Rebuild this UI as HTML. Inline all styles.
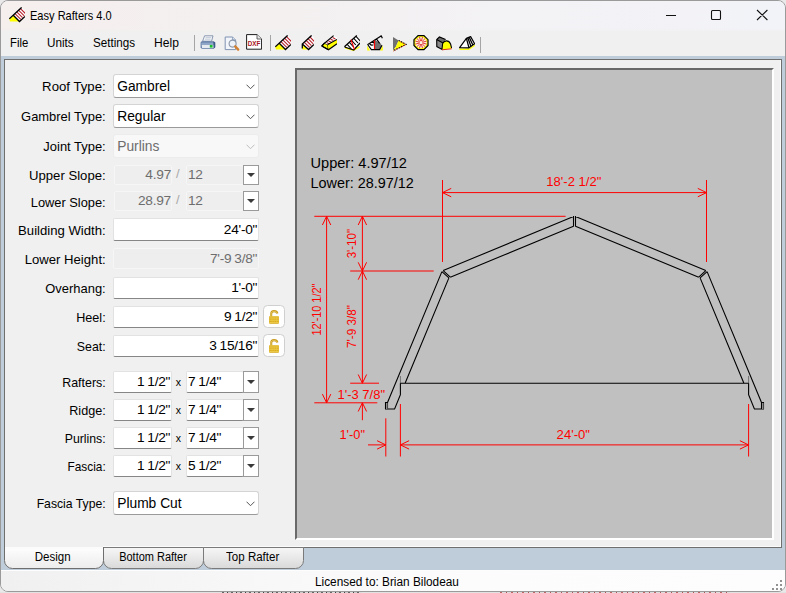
<!DOCTYPE html>
<html>
<head>
<meta charset="utf-8">
<title>Easy Rafters 4.0</title>
<style>
html,body{margin:0;padding:0;}
body{width:786px;height:593px;overflow:hidden;background:#e9e9e9;position:relative;font-family:"Liberation Sans",sans-serif;color:#000;}
.abs{position:absolute;}
#under{position:absolute;left:0;top:592px;width:786px;height:1px;background:#e2e2e2;}
#under i{position:absolute;top:0;height:1px;}
#win{position:absolute;left:0;top:0;width:784px;height:590px;border:1px solid #9a9a9a;border-radius:8px;background:#f0f0f0;overflow:hidden;}
#title{position:absolute;left:0;top:0;width:784px;height:30px;background:linear-gradient(90deg,#f5efee 0%,#f4f0f0 35%,#f3f2f5 65%,#f2f3f8 100%);}
#title .t{position:absolute;left:29.2px;top:7px;font-size:12.4px;line-height:16px;white-space:nowrap;transform:scaleX(0.892);transform-origin:left center;}
#menu{position:absolute;left:0;top:30px;width:784px;height:25px;background:#f0f0f0;}
#fade{position:absolute;left:0;top:27px;width:784px;height:6px;background:linear-gradient(to bottom,rgba(240,240,240,0),rgba(240,240,240,1));}
#menu span{position:absolute;top:3.6px;font-size:12.6px;line-height:16px;white-space:nowrap;transform-origin:left center;}
.sep{position:absolute;top:35px;width:1px;height:15px;background:#a0a0a0;}
.ico{position:absolute;top:34px;width:16px;height:16px;}
#frame{position:absolute;left:0;top:55px;width:784px;height:514px;background:#bfcddb;}
#panel{position:absolute;left:3px;top:3px;width:776px;height:487px;border:1px solid #6f6f6f;background:#f0f0f0;box-shadow:inset -1px -1px 0 #fbfbfb;}
#pg{position:absolute;left:0;top:0;width:786px;height:593px;}
.lbl{position:absolute;left:0;width:105.7px;transform:scaleX(0.995);transform-origin:right center;text-align:right;font-size:13px;line-height:19px;white-space:nowrap;color:#000;}
.cb{position:absolute;left:113px;width:144px;height:22px;border:1px solid #d4d4d4;border-bottom-color:#9a9a9a;border-radius:3px;background:#fff;font-size:13.8px;line-height:22px;}
.cb span{position:absolute;left:3.2px;top:1px;white-space:nowrap;}
.cb svg{position:absolute;right:3.4px;top:8.6px;}
.cb.dis{background:#f8f8f8;border-color:#ececec;color:#6d6d6d;}
.tb{position:absolute;height:21px;border:1px solid #e2e2e2;border-bottom:1px solid #868686;border-radius:2px;background:#fff;font-size:13.7px;letter-spacing:-0.25px;word-spacing:-0.6px;line-height:21px;white-space:nowrap;}
.tb.r{text-align:right;}
.tb.dis{background:#eeeeee;border:1px solid #f6f6f6;color:#6d6d6d;}
.tb span{position:absolute;top:0;}
.dd{position:absolute;width:14px;height:19px;border:1px solid #9a9a9a;background:#fff;}
.dd i{position:absolute;left:3px;top:8px;width:0;height:0;border-left:4px solid transparent;border-right:4px solid transparent;border-top:4px solid #3a3a3a;}
.x{position:absolute;font-size:10.5px;line-height:14px;}
.lock{position:absolute;width:19.6px;height:21px;border:1px solid #cfcfcf;border-radius:4.5px;background:#fefefe;}
#draw{position:absolute;left:290px;top:8px;width:475px;height:468px;border:2px solid #696969;border-right:2px solid #fff;border-bottom:2px solid #fff;background:#c0c0c0;}
.tab{position:absolute;top:546.8px;height:20px;font-size:12px;line-height:20px;text-align:center;white-space:nowrap;}
#status{position:absolute;left:0;top:569px;width:784px;height:20px;border-top:1px solid #fdfdfd;background:linear-gradient(90deg,#f0f0f0 0%,#f7f7f7 30%,#fcfcfc 60%,#fdfdfd 100%);font-size:12px;}
</style>
</head>
<body>
<div id="under"><i style="left:222px;width:140px;background:repeating-linear-gradient(90deg,#666 0 2px,#ddd 2px 5px,#444 5px 6px,#ccc 6px 9px)"></i><i style="left:500px;width:230px;background:repeating-linear-gradient(90deg,#b66 0 2px,#ddd 2px 6px,#a55 6px 7px,#ddd 7px 11px)"></i></div>
<div id="win">
  <div id="title">
    <span class="t">Easy Rafters 4.0</span>
  </div>
  <div id="menu">
    <span style="left:8.8px;transform:scaleX(0.9)">File</span>
    <span style="left:46px;transform:scaleX(0.93)">Units</span>
    <span style="left:92px;transform:scaleX(0.925)">Settings</span>
    <span style="left:153px;transform:scaleX(0.96)">Help</span>
  </div>
  <div id="fade"></div>
  <div id="frame">
    <div id="panel">
      <div id="draw"></div>
    </div>
  </div>
  <div id="status"><span class="abs" style="left:313.6px;top:3.6px;line-height:14px;white-space:nowrap;transform:scaleX(0.985);transform-origin:left center">Licensed to: Brian Bilodeau</span></div>
</div>
<div id="pg">
<svg id="dwg" width="786" height="593" viewBox="0 0 786 593" style="position:absolute;left:0;top:0">
<path d="M314.3 216.3L565.6 216.3M350.2 271L433.7 271M350.2 383.2L379 383.2M314.3 402.8L377.3 402.8M326.6 216.3L326.6 402.8M330.80 225.00L326.6 216.3L322.40 225.00M322.40 394.10L326.6 402.8L330.80 394.10M362.4 216.3L362.4 383.2M366.60 225.00L362.4 216.3L358.20 225.00M358.20 262.30L362.4 271L366.60 262.30M366.60 279.70L362.4 271L358.20 279.70M358.20 374.50L362.4 383.2L366.60 374.50M362.4 402.8L362.4 420.2M366.60 411.50L362.4 402.8L358.20 411.50M442.5 180L442.5 262M706.5 180L706.5 262M442.5 192.6L706.5 192.6M451.20 188.40L442.5 192.6L451.20 196.80M697.80 196.80L706.5 192.6L697.80 188.40M385.8 418.3L385.8 456.5M400.4 404L400.4 456.5M748.6 404L748.6 456.5M368 444.9L385.8 444.9M377.10 449.10L385.8 444.9L377.10 440.70M400.4 444.9L748.6 444.9M409.10 440.70L400.4 444.9L409.10 449.10M739.90 449.10L748.6 444.9L739.90 440.70" fill="none" stroke="#ff0000" stroke-width="1"/>
<path d="M400.4 383.2L400.4 376M748.6 383.2L748.6 376" fill="none" stroke="#707070" stroke-width="1"/>
<path d="M573.5 216.4L443.2 270.6M575.5 216.4L705.8 270.6M573.5 226.3L450.3 277.2M575.5 226.3L698.7 277.2M573.5 216L573.5 226.5M575.5 216L575.5 226.5M441.9 271.6L448.9 277.9M707.1 271.6L700.1 277.9M443.2 270.6L450.3 277.2M705.8 270.6L698.7 277.2M441.9 271.6L387.5 402.5M707.1 271.6L761.5 402.5M448.9 277.9L405.1 383.2M700.1 277.9L743.9 383.2M387.5 402.5L385.5 402.5L385.5 409L394.6 409L400.4 394.7L400.4 383.2M761.5 402.5L763.5 402.5L763.5 409L754.4 409L748.6 394.7L748.6 383.2M387.5 402.5L387.5 409M761.5 402.5L761.5 409M400.4 383.2L748.6 383.2" fill="none" stroke="#000" stroke-width="1.1" stroke-linejoin="miter"/>
<path d="M386 403h1.5v6h-1.5z" fill="#8c8c8c"/><path d="M762 403h1.5v6h-1.5z" fill="#8c8c8c"/>
<text x="546.3" y="185.8" font-size="13" fill="#ff0000" textLength="55" lengthAdjust="spacingAndGlyphs">18'-2 1/2&quot;</text>
<text x="556.6" y="439.1" font-size="13" fill="#ff0000" textLength="33.4" lengthAdjust="spacingAndGlyphs">24'-0&quot;</text>
<text x="337.5" y="398.8" font-size="13" fill="#ff0000" textLength="47.5" lengthAdjust="spacingAndGlyphs">1'-3 7/8&quot;</text>
<text x="339.5" y="438.8" font-size="13" fill="#ff0000" textLength="25.5" lengthAdjust="spacingAndGlyphs">1'-0&quot;</text>
<text x="355.8" y="258.3" font-size="13" fill="#ff0000" textLength="29.3" lengthAdjust="spacingAndGlyphs" transform="rotate(-90 355.8 258.3)">3'-10&quot;</text>
<text x="320.8" y="335.5" font-size="13" fill="#ff0000" textLength="51.8" lengthAdjust="spacingAndGlyphs" transform="rotate(-90 320.8 335.5)">12'-10 1/2&quot;</text>
<text x="356.3" y="348" font-size="13" fill="#ff0000" textLength="43" lengthAdjust="spacingAndGlyphs" transform="rotate(-90 356.3 348)">7'-9 3/8&quot;</text>
<text x="310.5" y="168" font-size="14.4" fill="#000" textLength="96.5" lengthAdjust="spacingAndGlyphs">Upper: 4.97/12</text>
<text x="310.5" y="188" font-size="14.4" fill="#000" textLength="103.2" lengthAdjust="spacingAndGlyphs">Lower: 28.97/12</text>
</svg>
<div class="lbl" style="top:77.0px;transform:scaleX(1.015)">Roof Type:</div>
<div class="cb" style="top:74px;height:22px;line-height:22px"><span>Gambrel</span><svg width="9" height="6" viewBox="0 0 9 6"><path d="M0.5 0.7 L4.5 4.7 L8.5 0.7" fill="none" stroke="#555" stroke-width="1"/></svg></div>
<div class="lbl" style="top:107.0px">Gambrel Type:</div>
<div class="cb" style="top:104px;height:22px;line-height:22px"><span>Regular</span><svg width="9" height="6" viewBox="0 0 9 6"><path d="M0.5 0.7 L4.5 4.7 L8.5 0.7" fill="none" stroke="#555" stroke-width="1"/></svg></div>
<div class="lbl" style="top:137.0px">Joint Type:</div>
<div class="cb dis" style="top:134px;height:22px;line-height:22px"><span>Purlins</span><svg width="9" height="6" viewBox="0 0 9 6"><path d="M0.5 0.7 L4.5 4.7 L8.5 0.7" fill="none" stroke="#bdbdbd" stroke-width="1"/></svg></div>
<div class="lbl" style="top:166.0px;transform:scaleX(1.01)">Upper Slope:</div>
<div class="tb dis" style="left:114px;top:165px;width:56px;height:18px;line-height:18px"><span style="right:0px">4.97</span></div>
<div class="x" style="left:176px;top:167px;color:#a8a8a8;font-size:13px">/</div>
<div class="tb dis" style="left:186px;top:165px;width:56px;height:18px;line-height:18px"><span style="left:1px">12</span></div>
<div class="dd" style="left:243px;top:165px;height:18px"><i style="top:7px"></i></div>
<div class="lbl" style="top:193.0px;transform:scaleX(0.987)">Lower Slope:</div>
<div class="tb dis" style="left:114px;top:191px;width:56px;height:18px;line-height:18px"><span style="right:0px">28.97</span></div>
<div class="x" style="left:176px;top:193px;color:#a8a8a8;font-size:13px">/</div>
<div class="tb dis" style="left:186px;top:191px;width:56px;height:18px;line-height:18px"><span style="left:1px">12</span></div>
<div class="dd" style="left:243px;top:191px;height:18px"><i style="top:7px"></i></div>
<div class="lbl" style="top:220.5px;transform:scaleX(1.01)">Building Width:</div>
<div class="tb" style="left:113px;top:218px;width:144px;height:21px;line-height:21px"><span style="right:0.8px">24'-0"</span></div>
<div class="lbl" style="top:249.5px;transform:scaleX(1.01)">Lower Height:</div>
<div class="tb dis" style="left:113px;top:248px;width:144px;height:19px;line-height:19px"><span style="right:0.8px">7'-9 3/8"</span></div>
<div class="lbl" style="top:279.0px">Overhang:</div>
<div class="tb" style="left:113px;top:277px;width:144px;height:20px;line-height:20px"><span style="right:0.8px">1'-0"</span></div>
<div class="lbl" style="top:308.0px;transform:scaleX(0.97)">Heel:</div>
<div class="tb" style="left:113px;top:306px;width:144px;height:20px;line-height:20px"><span style="right:0.8px">9 1/2"</span></div>
<div class="lbl" style="top:337.0px;transform:scaleX(0.95)">Seat:</div>
<div class="tb" style="left:113px;top:335px;width:144px;height:20px;line-height:20px"><span style="right:0.8px">3 15/16"</span></div>
<div class="lock" style="left:263.2px;top:305px"></div>
<div class="lock" style="left:263.2px;top:334px"></div>
<div class="lbl" style="top:373.0px;transform:scaleX(0.955)">Rafters:</div>
<div class="tb" style="left:113px;top:371px;width:57px;height:20px;line-height:20px"><span style="right:0.8px">1 1/2"</span></div>
<div class="x" style="left:175.8px;top:374.6px;">x</div>
<div class="tb" style="left:186px;top:371px;width:56px;height:20px;line-height:20px"><span style="left:1px">7 1/4"</span></div>
<div class="dd" style="left:243px;top:371px;height:20px"><i style="top:8px"></i></div>
<div class="lbl" style="top:401.0px;transform:scaleX(0.97)">Ridge:</div>
<div class="tb" style="left:113px;top:399px;width:57px;height:20px;line-height:20px"><span style="right:0.8px">1 1/2"</span></div>
<div class="x" style="left:175.8px;top:402.6px;">x</div>
<div class="tb" style="left:186px;top:399px;width:56px;height:20px;line-height:20px"><span style="left:1px">7 1/4"</span></div>
<div class="dd" style="left:243px;top:399px;height:20px"><i style="top:8px"></i></div>
<div class="lbl" style="top:429.0px;transform:scaleX(0.945)">Purlins:</div>
<div class="tb" style="left:113px;top:427px;width:57px;height:20px;line-height:20px"><span style="right:0.8px">1 1/2"</span></div>
<div class="x" style="left:175.8px;top:430.6px;">x</div>
<div class="tb" style="left:186px;top:427px;width:56px;height:20px;line-height:20px"><span style="left:1px">7 1/4"</span></div>
<div class="dd" style="left:243px;top:427px;height:20px"><i style="top:8px"></i></div>
<div class="lbl" style="top:457.0px;transform:scaleX(0.91)">Fascia:</div>
<div class="tb" style="left:113px;top:455px;width:57px;height:20px;line-height:20px"><span style="right:0.8px">1 1/2"</span></div>
<div class="x" style="left:175.8px;top:458.6px;">x</div>
<div class="tb" style="left:186px;top:455px;width:56px;height:20px;line-height:20px"><span style="left:1px">5 1/2"</span></div>
<div class="dd" style="left:243px;top:455px;height:20px"><i style="top:8px"></i></div>
<div class="lbl" style="top:494.0px;transform:scaleX(0.94)">Fascia Type:</div>
<div class="cb" style="top:491px;height:22px;line-height:22px"><span>Plumb Cut</span><svg width="9" height="6" viewBox="0 0 9 6"><path d="M0.5 0.7 L4.5 4.7 L8.5 0.7" fill="none" stroke="#555" stroke-width="1"/></svg></div>
<svg class="abs" style="left:9px;top:7px" width="16" height="16" viewBox="0 0 16 16"><path d="M0.4 12L4.5 8.6L10.3 14.6L1 14.6Z" fill="#ffff00"/><path d="M4.5 8.5L12.5 0.6L16 4.1V9.6L10.5 14.5Z" fill="#fff"/><path d="M6.20 6.80l5.6 5.6M7.95 5.05l5.6 5.6M9.70 3.30l5.6 5.6M11.45 1.55l5.6 5.6" stroke="#b8222e" stroke-width="1.1" fill="none"/><path d="M0.3 11.8L12.6 0.4M4.5 8.5L10.5 14.5L16 9.4" stroke="#000" stroke-width="1.3" fill="none"/></svg>
<svg class="abs" style="left:200px;top:35px" width="16" height="16" viewBox="0 0 16 16"><path d="M4.6 0.8H13L11.6 6.2H2.6Z" fill="#f4f6fa" stroke="#7f8fa8" stroke-width="0.9"/><path d="M5.6 2.6H11.2M5 4.2H10.6" stroke="#b8c2d0" stroke-width="0.8"/><path d="M1.6 6.2H13.4L15.2 7.6V12.2L13.6 13.8H1.8L0.6 12.6V7.6Z" fill="#5f7ba4"/><path d="M1.6 7.4H13L14.4 8.4V9.6H1Z" fill="#8ea6c8"/><path d="M1.6 9.8H13.8V13H2Z" fill="#e6ebf2"/><rect x="9.8" y="10" width="2.8" height="2.6" fill="#18c030"/><path d="M13.4 6.2L15.2 7.6V12.2L13.6 13.8Z" fill="#3d5a86"/></svg>
<svg class="abs" style="left:223.5px;top:35.5px" width="16" height="16" viewBox="0 0 16 16"><path d="M1.2 1H8.6L11.6 4V13.6H1.2Z" fill="#f2f5fa" stroke="#7f93b2" stroke-width="1"/><path d="M8.6 1V4H11.6" fill="#dfe6f0" stroke="#7f93b2" stroke-width="0.8"/><circle cx="8.6" cy="7.6" r="3.5" fill="#eef3f9" stroke="#8a97aa" stroke-width="1.1"/><path d="M11.2 10.4L14.2 13.6" stroke="#d08030" stroke-width="2.4" stroke-linecap="round"/></svg>
<svg class="abs" style="left:246px;top:34px" width="16" height="16" viewBox="0 0 16 16"><path d="M0.6 0.6H11L15.6 5V15.2H0.6Z" fill="#fff" stroke="#111" stroke-width="0.95"/><path d="M11 0.6V5H15.6" fill="#e8e8e8" stroke="#555" stroke-width="0.9"/><text x="8.1" y="11.6" font-size="6.4" font-weight="bold" fill="#a81424" text-anchor="middle" font-family="Liberation Sans, sans-serif" textLength="12.6" lengthAdjust="spacingAndGlyphs">DXF</text></svg>
<svg class="abs" style="left:275px;top:35px" width="16" height="16" viewBox="0 0 16 16"><path d="M0.4 12L4.5 8.6L10.3 14.6L1 14.6Z" fill="#ffff00"/><path d="M4.5 8.5L12.5 0.6L16 4.1V9.6L10.5 14.5Z" fill="#fff"/><path d="M6.20 6.80l5.6 5.6M7.95 5.05l5.6 5.6M9.70 3.30l5.6 5.6M11.45 1.55l5.6 5.6" stroke="#b8222e" stroke-width="1.1" fill="none"/><path d="M0.3 11.8L12.6 0.4M4.5 8.5L10.5 14.5L16 9.4" stroke="#000" stroke-width="1.3" fill="none"/></svg>
<svg class="abs" style="left:298px;top:35px" width="16" height="16" viewBox="0 0 16 16"><path d="M4.3 9.5L9.8 14.6L4.3 14.6Z" fill="#ffff00"/><path d="M4.5 9L13.5 0.6L16 3V9.5L10.6 14.5Z" fill="#fff"/><path d="M6.40 7.30l5.2 5.2M8.20 5.50l5.2 5.2M10.00 3.70l5.2 5.2M11.80 1.90l5.2 5.2" stroke="#b8222e" stroke-width="1.1" fill="none"/><path d="M4.3 13.6V9L13.6 0.4M4.6 9.2L10.6 14.5L16 9.4" stroke="#000" stroke-width="1.3" fill="none"/></svg>
<svg class="abs" style="left:321.4px;top:35px" width="16" height="16" viewBox="0 0 16 16"><path d="M0.8 11L3.5 8.2L6.8 9.6L7.5 14.8Z" fill="#ffff00" stroke="#000" stroke-width="1.1" stroke-linejoin="round"/><path d="M7.5 14.8L16 8.6V4.6L6.8 9.6Z" fill="#ffff00"/><path d="M3.5 8.2L12.5 0.8L16 2.4V4.6L6.8 9.6Z" fill="#fff"/><path d="M5.60 7.60l2.8 1.4M7.60 5.90l2.8 1.4M9.60 4.20l2.8 1.4M11.60 2.50l2.8 1.4" stroke="#b8222e" stroke-width="1.1" fill="none"/><path d="M0.8 11L3.5 8.2L12.6 0.6M6.8 9.6L16 4.4M7.5 14.8L16 8.8M0.8 11L7.5 14.8" stroke="#000" stroke-width="1.2" fill="none"/></svg>
<svg class="abs" style="left:344.2px;top:35px" width="16" height="16" viewBox="0 0 16 16"><path d="M1 13.6L9.5 16L15.6 12.5L15.6 11L9.8 14.4L1 12Z" fill="#ffff00"/><path d="M0.6 11.6L12.6 0.8L16 8.2L9.8 15Z" fill="#fff"/><path d="M3.20 9.40L7.40 14.00M5.40 7.40L9.60 12.00M7.60 5.40L11.80 10.00M9.80 3.40L14.00 8.00M12.00 1.40L16.20 6.00" stroke="#000" stroke-width="1.1" fill="none"/><path d="M0.4 11.8L12.8 0.6M0.6 12L9.8 15L16 8" stroke="#000" stroke-width="1.3" fill="none"/><path d="M7 4.6L10.4 14.4" stroke="#ff0000" stroke-width="1.2" fill="none"/></svg>
<svg class="abs" style="left:367px;top:35px" width="16" height="16" viewBox="0 0 16 16"><path d="M0.2 10.5L3 15.6L0.2 15.6ZM15.8 10.5L13 15.6L15.8 15.6Z" fill="#ffff00"/><path d="M1 9.4L7.4 4.6L7.4 14L4.4 14.6L2 12Z" fill="#fff"/><path d="M7.6 4.6L13.6 8.6L14.8 10.4L12.4 14.6L8.4 14.6L7.6 14Z" fill="#707070"/><path d="M0.4 9.8L14.4 0.8M14 0.4L15.4 3.2M9.6 4L12.6 8.4M6 6.4L7.2 8.4M1 10L4.4 14.6L12.6 14.6L15 10.2M2.4 8.4C4 10.6 5.4 10.6 6.4 9.6" stroke="#000" stroke-width="1.2" fill="none"/><path d="M7.5 5.4V14.2" stroke="#ff0000" stroke-width="1.2"/></svg>
<svg class="abs" style="left:390.5px;top:35.6px" width="16" height="16" viewBox="0 0 16 16"><path d="M2 1L7.6 4.4L5 10.4L2 14.4Z" fill="#707070"/><path d="M7.6 4.4L15.2 8.4L2 14.8L5 10.4Z" fill="#ffff00"/><path d="M7.6 4.4L15.2 8.4L2 14.8" stroke="#000" stroke-width="1.1" stroke-dasharray="1.4 1.2" fill="none"/><path d="M7.6 4.8L15 8.6L2.2 15.2" stroke="#e02020" stroke-width="0.9" stroke-dasharray="1.2 1.4" stroke-dashoffset="1.3" fill="none"/></svg>
<svg class="abs" style="left:413.4px;top:34.6px" width="16" height="16" viewBox="0 0 16 16"><path d="M15.02 10.51L10.91 14.62L5.09 14.62L0.98 10.51L0.98 4.69L5.09 0.58L10.91 0.58L15.02 4.69Z" fill="#ffff00" stroke="#000" stroke-width="1.2"/><circle cx="8" cy="7.6" r="5.6" fill="#fdf1e0"/><path d="M9.45 7.99L13.60 9.10M9.06 8.66L12.10 11.70M8.39 9.05L9.50 13.20M7.61 9.05L6.50 13.20M6.94 8.66L3.90 11.70M6.55 7.99L2.40 9.10M6.55 7.21L2.40 6.10M6.94 6.54L3.90 3.50M7.61 6.15L6.50 2.00M8.39 6.15L9.50 2.00M9.06 6.54L12.10 3.50M9.45 7.21L13.60 6.10" stroke="#e02828" stroke-width="0.9" fill="none"/></svg>
<svg class="abs" style="left:436px;top:35.4px" width="16" height="16" viewBox="0 0 16 16"><path d="M0.6 4.6L3.4 2L9.6 4.6L6.6 8.4L6 14.4L0.8 11.6Z" fill="#8a8a8a"/><path d="M0.6 4.6L3.4 2L9.6 4.6L6.6 7.6Z" fill="#6a6a6a"/><path d="M6 14.4L6.6 8.6C8 5.4 12.6 4.4 14.6 9L15.6 13.4L6 14.4Z" fill="#ffff00"/><path d="M0.6 4.6L3.4 2L9.6 4.6M0.6 4.6L6.6 7.8M0.7 4.6L0.8 11.6L6 14.4L6.6 8.6C8 5.4 12.6 4.4 14.6 9L15.6 13.2" stroke="#000" stroke-width="1.1" fill="none"/><path d="M6 14.8L15.6 13.8" stroke="#e03010" stroke-width="1" fill="none"/></svg>
<svg class="abs" style="left:459.4px;top:35px" width="16" height="16" viewBox="0 0 16 16"><path d="M0.4 13.4L10 13.4L15.8 9.6V11L10 15L0.4 15Z" fill="#ffff00"/><path d="M0.6 12.6L7.4 3.4L11.6 1.6L15.6 8.8L10 12.8Z" fill="#fff"/><path d="M0.6 12.6L7.4 3.4L11.6 1.6L15.6 8.8L10 12.8Z" fill="none" stroke="#000" stroke-width="1.2" stroke-linejoin="round"/><path d="M7.4 3.4L10 12.8M8.8 2.8L12 11.4M10.2 2.2L13.8 10" stroke="#000" stroke-width="1.3" fill="none"/></svg>
<div class="abs" style="left:194px;top:35px;width:1px;height:16px;background:#a5a5a5"></div>
<div class="abs" style="left:270px;top:35px;width:1px;height:16px;background:#a5a5a5"></div>
<div class="abs" style="left:480px;top:37px;width:1px;height:16px;background:#a5a5a5"></div>
<svg class="abs" style="left:660px;top:5px" width="115" height="20" viewBox="660 5 115 20"><path d="M666 15.5H676M711.5 11.5a1 1 0 0 1 1-1h7a1 1 0 0 1 1 1v7a1 1 0 0 1-1 1h-7a1 1 0 0 1-1-1ZM757 10L767.4 20M767.4 10L757 20" fill="none" stroke="#111" stroke-width="1.1"/></svg>
<svg class="abs" style="left:267px;top:309px" width="14" height="16" viewBox="0 0 14 16"><path d="M4.2 7.6V4.8C4.2 1.4 9.6 1.2 10.4 4.6" fill="none" stroke="#c79a1e" stroke-width="2.1"/><path d="M4.0 7.6V4.8C4.0 1.9 9.2 1.5 10.2 4.4" fill="none" stroke="#efd576" stroke-width="0.7"/><rect x="2.1" y="7.2" width="9.8" height="7.5" rx="0.6" fill="#d6a516"/><path d="M2.3 8.1H11.7M2.3 9.9H11.7M2.3 11.7H11.7M2.3 13.5H11.7" stroke="#f2d558" stroke-width="0.8"/><path d="M5 7.4V14.5M7.2 7.4V14.5M9.4 7.4V14.5" stroke="#e9c440" stroke-width="0.7"/></svg>
<svg class="abs" style="left:267px;top:338px" width="14" height="16" viewBox="0 0 14 16"><path d="M4.2 7.6V4.8C4.2 1.4 9.6 1.2 10.4 4.6" fill="none" stroke="#c79a1e" stroke-width="2.1"/><path d="M4.0 7.6V4.8C4.0 1.9 9.2 1.5 10.2 4.4" fill="none" stroke="#efd576" stroke-width="0.7"/><rect x="2.1" y="7.2" width="9.8" height="7.5" rx="0.6" fill="#d6a516"/><path d="M2.3 8.1H11.7M2.3 9.9H11.7M2.3 11.7H11.7M2.3 13.5H11.7" stroke="#f2d558" stroke-width="0.8"/><path d="M5 7.4V14.5M7.2 7.4V14.5M9.4 7.4V14.5" stroke="#e9c440" stroke-width="0.7"/></svg>
<svg class="abs" style="left:0;top:540px" width="320" height="32" viewBox="0 540 320 32">
    <defs><linearGradient id="tg1" x1="0" y1="0" x2="0" y2="1"><stop offset="0" stop-color="#ffffff"/><stop offset="1" stop-color="#ececec"/></linearGradient>
    <linearGradient id="tg2" x1="0" y1="0" x2="0" y2="1"><stop offset="0" stop-color="#f7f7f7"/><stop offset="1" stop-color="#d9d9d9"/></linearGradient></defs>
    <path d="M203.5 547.5H303.5V560.5a8 8 0 0 1-8 8H211.5a8 8 0 0 1-8-8Z" fill="url(#tg2)" stroke="#7a7a7a" stroke-width="1"/>
    <path d="M103.5 547.5H203.5V560.5a8 8 0 0 1-8 8H111.5a8 8 0 0 1-8-8Z" fill="url(#tg2)" stroke="#7a7a7a" stroke-width="1"/>
    <path d="M4.5 546V560.5a8 8 0 0 0 8 8H95.5a8 8 0 0 0 8-8V546Z" fill="url(#tg1)" stroke="none"/>
    <path d="M4.5 546V560.5a8 8 0 0 0 8 8H95.5a8 8 0 0 0 8-8V547" fill="none" stroke="#6e6e6e" stroke-width="1"/>
    <rect x="5" y="545" width="98" height="2.6" fill="#f0f0f0"/>
    <rect x="5" y="547" width="98" height="2" fill="#fbfbfb"/>
    </svg>
<div class="tab" style="left:2.799999999999997px;width:100px"><span style="display:inline-block;transform:scaleX(0.96)">Design</span></div>
<div class="tab" style="left:102.9px;width:100px"><span style="display:inline-block;transform:scaleX(0.915)">Bottom Rafter</span></div>
<div class="tab" style="left:202.3px;width:100px"><span style="display:inline-block;transform:scaleX(0.96)">Top Rafter</span></div>
<svg class="abs" style="left:770px;top:578px" width="14" height="13" viewBox="770 578 14 13"><rect x="780" y="580" width="2" height="2" fill="#929292"/><rect x="776" y="584" width="2" height="2" fill="#929292"/><rect x="780" y="584" width="2" height="2" fill="#929292"/><rect x="772" y="588" width="2" height="2" fill="#929292"/><rect x="776" y="588" width="2" height="2" fill="#929292"/><rect x="780" y="588" width="2" height="2" fill="#929292"/></svg>
</div>
</body>
</html>
